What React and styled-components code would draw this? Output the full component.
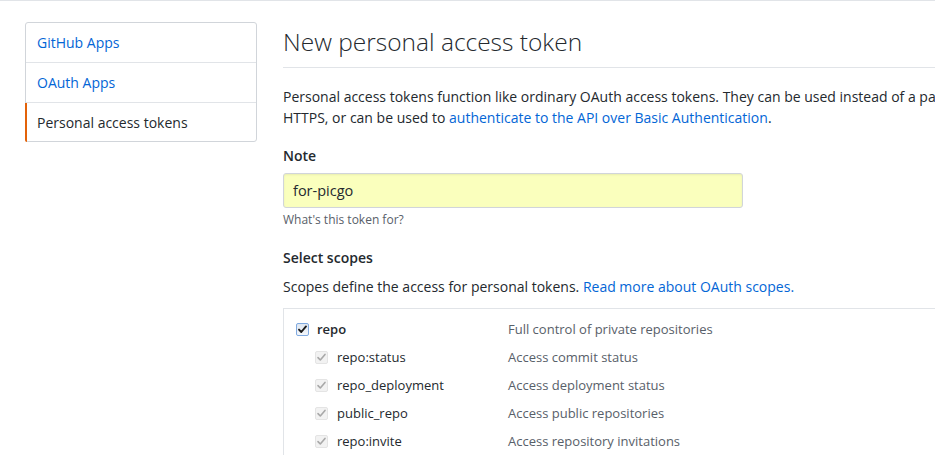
import styled, { createGlobalStyle } from 'styled-components'

const GlobalStyle = createGlobalStyle`
    html, body {
        margin: 0;
        padding: 0;
        overflow: hidden;
        background: #fff;
    }
    body {
        font-family: "Open Sans", "Noto Sans", sans-serif;
        font-size: 14px;
        color: #24292e;
    }
`

const menuItems = [
    { label: 'GitHub Apps' },
    { label: 'OAuth Apps' },
    { label: 'Personal access tokens', active: true },
]

const scopes = [
    { name: 'repo', desc: 'Full control of private repositories', top: true },
    { name: 'repo:status', desc: 'Access commit status' },
    { name: 'repo_deployment', desc: 'Access deployment status' },
    { name: 'public_repo', desc: 'Access public repositories' },
    { name: 'repo:invite', desc: 'Access repository invitations' },
]

const Check = ({ top }) => {
    return <Box $top={top}>
        <svg width="11" height="11" viewBox="0 0 11 11">
            <path d="M2 5.6 L4.3 8 L9 2.4" fill="none" stroke={top ? '#1b1b1b' : '#a8a8a8'}
                strokeWidth={top ? 1.9 : 1.6} strokeLinecap="round" strokeLinejoin="round" />
        </svg>
    </Box>
}

const App = () => {
    return <Page>
        <GlobalStyle />
        <Menu>
            {menuItems.map(item =>
                <MenuItem key={item.label} $active={item.active}>{item.label}</MenuItem>
            )}
        </Menu>
        <Main>
            <Heading>New personal access token</Heading>
            <Lead>
                Personal access tokens function like ordinary OAuth access tokens. They can be used instead of a password for Git over<br />
                HTTPS, or can be used to <Link href="#">authenticate to the API over Basic Authentication</Link>.
            </Lead>
            <Label>Note</Label>
            <Input type="text" value="for-picgo" readOnly />
            <Hint>What's this token for?</Hint>
            <Label $gap={18}>Select scopes</Label>
            <Text>Scopes define the access for personal tokens. <Link href="#">Read more about OAuth scopes.</Link></Text>
            <ScopeList>
                {scopes.map(scope =>
                    <ScopeRow key={scope.name}>
                        <ScopeName $nested={!scope.top}>
                            <Check top={scope.top} />
                            <span>{scope.name}</span>
                        </ScopeName>
                        <ScopeDesc>{scope.desc}</ScopeDesc>
                    </ScopeRow>
                )}
            </ScopeList>
        </Main>
    </Page>
}

export default App;

const Page = styled.div`
    display: flex;
    gap: 26px;
    width: 1100px;
    padding: 21px 0 0 25px;
    border-top: 1px solid #e1e4e8;
`

const Menu = styled.nav`
    flex: 0 0 232px;
    align-self: flex-start;
    box-sizing: border-box;
    border: 1px solid #d1d5da;
    border-radius: 3px;
`

const MenuItem = styled.a`
    position: relative;
    display: flex;
    align-items: center;
    height: 39px;
    padding-left: 11px;
    font-size: 14px;
    color: ${p => p.$active ? '#24292e' : '#0366d6'};
    text-decoration: none;
    border-bottom: 1px solid #e1e4e8;

    &:last-child {
        border-bottom: none;
        height: 38px;
    }

    &::before {
        content: '';
        display: ${p => p.$active ? 'block' : 'none'};
        position: absolute;
        left: -1px;
        top: 0;
        bottom: -1px;
        width: 2px;
        background: #e36209;
        border-bottom-left-radius: 3px;
    }
`

const Main = styled.main`
    flex: 0 0 760px;
    display: flex;
    flex-direction: column;
    align-items: flex-start;
`

const Heading = styled.h2`
    align-self: stretch;
    margin: 2px 0 0;
    padding-bottom: 7px;
    font-size: 24.5px;
    font-weight: 300;
    line-height: 36px;
    border-bottom: 1px solid #e1e4e8;
`

const Lead = styled.p`
    margin: 18px 0 0;
    line-height: 21px;
    white-space: nowrap;
`

const Link = styled.a`
    color: #0366d6;
    text-decoration: none;
`

const Label = styled.label`
    margin-top: ${p => p.$gap || 17}px;
    font-weight: 600;
    line-height: 21px;
`

const Input = styled.input`
    box-sizing: border-box;
    width: 460px;
    height: 35px;
    margin-top: 7px;
    padding: 0 9px;
    font: inherit;
    font-size: 14.5px;
    color: #24292e;
    background: #faffbd;
    border: 1px solid #d1d5da;
    border-radius: 3px;
    box-shadow: inset 0 1px 2px rgba(27, 31, 35, 0.075);
    outline: none;
`

const Hint = styled.p`
    margin: 3px 0 0;
    font-size: 12px;
    line-height: 18px;
    color: #586069;
`

const Text = styled.p`
    margin: 8px 0 0;
    line-height: 21px;
`

const ScopeList = styled.div`
    align-self: stretch;
    margin-top: 11px;
    padding: 6px 0 0 12px;
    border-top: 1px solid #e1e4e8;
    border-left: 1px solid #e1e4e8;
`

const ScopeRow = styled.div`
    display: grid;
    grid-template-columns: 212px 1fr;
    height: 28px;
    font-size: 13px;
    line-height: 29px;
`

const ScopeName = styled.div`
    display: flex;
    align-items: center;
    gap: ${p => p.$nested ? 9 : 8}px;
    padding-left: ${p => p.$nested ? 19 : 0}px;
    font-weight: ${p => p.$nested ? 400 : 600};
`

const ScopeDesc = styled.div`
    color: #586069;
`

const Box = styled.span`
    display: flex;
    align-items: center;
    justify-content: center;
    box-sizing: border-box;
    width: 13px;
    height: 13px;
    margin-top: -1px;
    border: 1px solid ${p => p.$top ? '#7fa9e0' : '#e4e4e4'};
    border-radius: 2px;
    background: ${p => p.$top ? 'linear-gradient(#dfe7f1, #f3f6fa)' : '#f2f2f2'};
`
